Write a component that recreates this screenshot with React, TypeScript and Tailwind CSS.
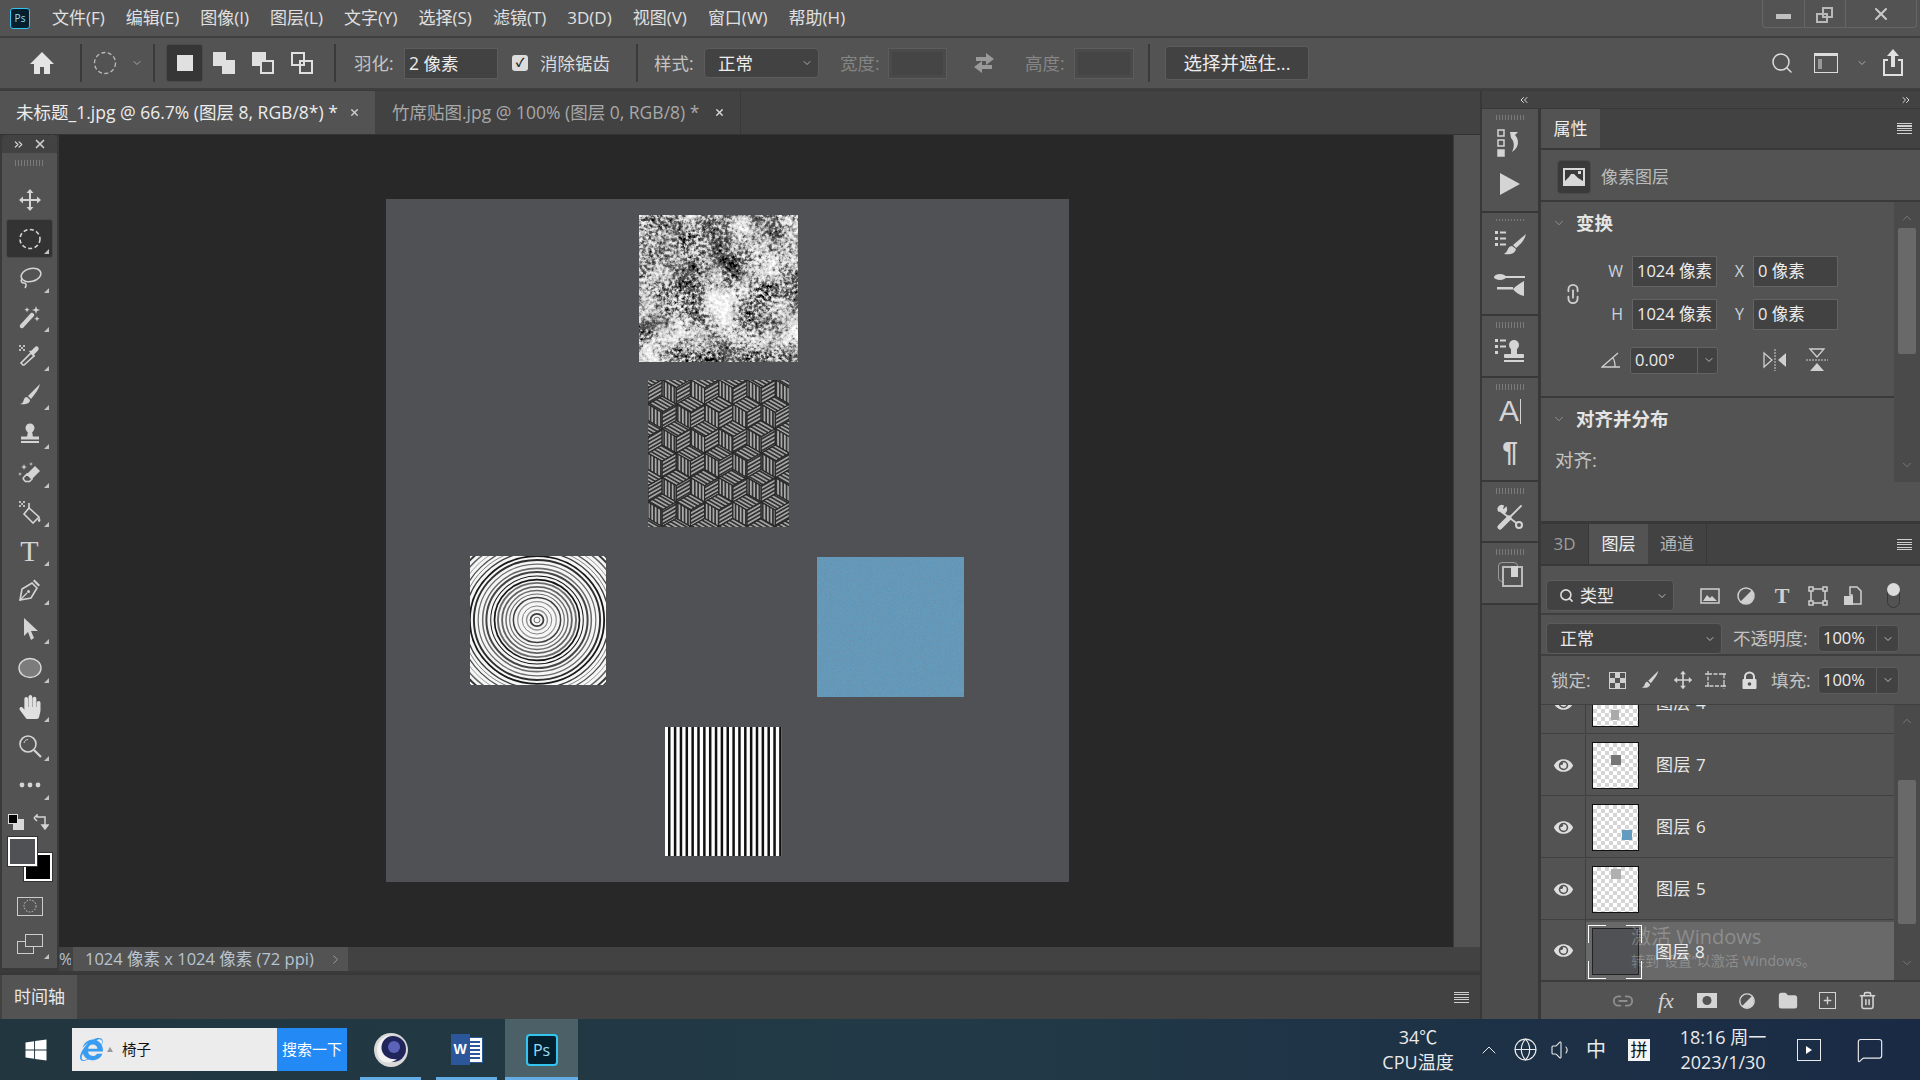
import React from "react";
import { ChevronDown, ChevronUp, ChevronsLeft, ChevronsRight, Globe, Volume1, MessageSquare, Search, X, Link2, Folder, Trash2, Plus, ChevronRight } from "lucide-react";
import { FaHandPaper, FaWindows, FaInternetExplorer, FaEye } from "react-icons/fa";

const menus = ["文件(F)", "编辑(E)", "图像(I)", "图层(L)", "文字(Y)", "选择(S)", "滤镜(T)", "3D(D)", "视图(V)", "窗口(W)", "帮助(H)"];

const Grip = () => (
    <div className="h-[6px] w-[29px] mx-auto bg-[repeating-linear-gradient(90deg,#7a7a7a_0,#7a7a7a_1px,transparent_1px,transparent_3px)]" />
);

const Tri = () => (
    <span className="absolute right-[8px] bottom-[4px] w-0 h-0 border-l-[5px] border-l-transparent border-b-[5px] border-b-[#c4c4c4]" />
);

const Burger = ({ className = "" }: { className?: string }) => (
    <div className={`w-[15px] h-[11px] bg-[repeating-linear-gradient(180deg,#cfcfcf_0,#cfcfcf_1px,transparent_1px,transparent_2.5px)] ${className}`} />
);

const Ico = ({ children, size = 24, className = "" }: { children: React.ReactNode; size?: number; className?: string }) => (
    <svg width={size} height={size} viewBox="0 0 24 24" fill="#d4d4d4" className={className}>
        {children}
    </svg>
);

const line = { fill: "none", stroke: "#d4d4d4", strokeWidth: 1.6 };

const Checker = () => (
    <g fill="#bdbdbd">
        <rect x="1" y="1" width="2" height="2" />
        <rect x="5" y="1" width="2" height="2" />
        <rect x="3" y="3" width="2" height="2" />
        <rect x="1" y="5" width="2" height="2" />
        <rect x="5" y="5" width="2" height="2" />
    </g>
);

const tools: React.ReactNode[] = [
    <Ico><path d="M12 1l3.500 4H13v6h6V8.500l4 3.500-4 3.500V13h-6v6h2.500L12 23l-3.500-4H11v-6H5v2.500L1 12l4-3.500V11h6V5H8.500z" /></Ico>,
    <Ico><ellipse cx="12" cy="12" rx="10" ry="9.500" {...line} strokeDasharray="4 2.500" /></Ico>,
    <Ico><ellipse cx="13" cy="9" rx="10" ry="6.500" transform="rotate(-14 13 9)" {...line} /><path d="M4 13c-2 2 0 4 2 4s3 2 1 5" {...line} /></Ico>,
    <Ico><path d="M2 20l11-12c1-1 4 1 3 3L5 23c-2 1-4-1-3-3z" /><path d="M18 1l1 3 3 1-3 1-1 3-1-3-3-1 3-1zM9 2l.7 2 2 .7-2 .7L9 7.500l-.7-2-2-.7 2-.7zM19 11l.7 2 2 .7-2 .7-.7 2-.7-2-2-.7 2-.7z" /></Ico>,
    <Ico><Checker /><path d="M5 21l-2-2 10-10 3 3-10 9z" {...line} /><path d="M13 7l4-4c2-2 5 1 3 3.500l-4 4 1 1-1 1-5-5 1-1z" /></Ico>,
    <Ico><path d="M22 1L10 13l3 3C17 11 21 6 22 1z" /><path d="M9 14c-3 0-3 3-4 5-.5 1-2 2-3 2 4 1 10 0 10-4z" /></Ico>,
    <Ico><circle cx="12" cy="6" r="4.500" /><path d="M10 9h4l1 6h-6z" /><rect x="3" y="14.500" width="18" height="3" /><rect x="3" y="19" width="18" height="2" /></Ico>,
    <Ico><path d="M9 13l8-8 5 5-8 8z" /><path d="M9 13l-3 3c-1 1-1 2 0 3l1.500 1.500h4L14 18z" {...line} /><path d="M6 3l.8 2.200L9 6l-2.200.8L6 9l-.8-2.200L3 6l2.200-.8zM13 1l.5 1.500L15 3l-1.500.5L13 5l-.5-1.500L11 3l1.500-.5zM2 11l.5 1.500L4 13l-1.500.5L2 15l-.5-1.500L0 13l1.500-.5z" /></Ico>,
    <Ico><Checker /><path d="M11 8l10 9-6 6-9-9z" {...line} /><path d="M11 8V3" {...line} /><path d="M21 17c1 1.500 2 3 1 4.500-1 1-2.500 0-2-1.500z" /></Ico>,
    <span className="font-['Liberation_Serif'] text-[30px] leading-none text-[#d4d4d4]">T</span>,
    <Ico><path d="M2 22l2-11 10-6 5 5-6 10z" {...line} /><path d="M15 3l1.500-1.500 5.500 5.500L20.500 8.500z" /><path d="M2 22l7-7" {...line} strokeWidth="1.200" /><circle cx="10.500" cy="13.500" r="1.500" /></Ico>,
    <Ico><path d="M6 1l14 13h-7l3 7-3 2-3-8-4 4z" /></Ico>,
    <Ico><ellipse cx="12" cy="12" rx="11" ry="9.500" fill="#7c7c7c" stroke="#d8d8d8" strokeWidth="1.400" /></Ico>,
    <FaHandPaper size={24} color="#e0e0e0" />,
    <Ico><circle cx="10" cy="10" r="8" {...line} /><path d="M16 16l7 7" {...line} strokeWidth="2.200" /><path d="M6 9c.5-2 2-3.500 4-3.500" {...line} strokeWidth="1" /></Ico>,
    <Ico><circle cx="4" cy="12" r="2.400" /><circle cx="12" cy="12" r="2.400" /><circle cx="20" cy="12" r="2.400" /></Ico>,
];

const Toolbar = () => (
    <div className="w-[57px] h-[833px] bg-[#535353] border-r-2 border-[#3a3a3a] rounded-t-md ml-[2px] flex flex-col shrink-0">
        <div className="h-[18px] bg-[#424242] flex items-center justify-between px-[10px] rounded-t-md">
            <ChevronsRight size={13} color="#ddd" />
            <X size={14} color="#ccc" strokeWidth={3} />
        </div>
        <div className="h-[27px] pt-[7px]"><Grip /></div>
        {tools.map((t, i) => (
            <div key={i} className="relative h-[39px] flex items-center justify-center">
                {i === 1 && <div className="absolute left-[4px] right-[4px] top-0 bottom-0 bg-[#333333] border border-[#4a4a4a] rounded-[3px]" />}
                <div className="relative flex items-center justify-center">{t}</div>
                {i !== 0 && <Tri />}
            </div>
        ))}
        <div className="flex justify-between items-center h-[20px] mt-[8px] pl-[6px] pr-[8px]">
            <div className="relative w-[16px] h-[16px]">
                <div className="absolute right-0 bottom-0 w-[11px] h-[11px] bg-[#d8d8d8]" />
                <div className="absolute left-0 top-0 w-[10px] h-[10px] bg-black border border-[#ddd]" />
            </div>
            <svg width="16" height="16" viewBox="0 0 16 16" fill="none" stroke="#d4d4d4" strokeWidth="1.500"><path d="M1 4l3-3v2h8v9" /><path d="M9 11l3 4 3-4z" fill="#d4d4d4" /><path d="M1 4l3 3" /></svg>
        </div>
        <div className="relative h-[44px] mt-[6px]">
            <div className="absolute left-[22px] top-[15px] w-[28px] h-[28px] bg-black border-2 border-white outline outline-[#333]" />
            <div className="absolute left-[6px] top-[-1px] w-[29px] h-[29px] bg-[#505155] border-2 border-white outline outline-[#333]" />
        </div>
        <div className="h-[38px] mt-[5px] flex items-center justify-center">
            <div className="w-[26px] h-[19px] border border-[#ccc] flex items-center justify-center">
                <svg width="14" height="14" viewBox="0 0 14 14"><circle cx="7" cy="7" r="6" fill="none" stroke="#ccc" strokeDasharray="1.500 1.500" /></svg>
            </div>
        </div>
        <div className="relative h-[38px] flex items-center justify-center">
            <div className="relative w-[26px] h-[20px]">
                <div className="absolute left-0 bottom-0 w-[17px] h-[13px] border border-[#ccc]" />
                <div className="absolute right-0 top-0 w-[18px] h-[13px] border border-[#ccc] bg-[#535353]" />
            </div>
            <Tri />
        </div>
    </div>
);

const h = 14.15;
const r = 16.3;
const cubes: { x: number; y: number }[] = [];
for (let row = -1; row < 8; row++) {
    for (let col = -1; col < 7; col++) {
        cubes.push({ x: col * h * 2 + (row % 2 === 0 ? 0 : h), y: row * r * 1.5 + 8 });
    }
}

const rings: { rx: number; sw: number; c: string; o: number }[] = [];
let seed = 11;
const rnd = () => {
    seed = (seed * 16807) % 2147483647;
    return seed / 2147483647;
};
for (let a = 3; a < 115; a += 3.4 + rnd() * 1.3) {
    rings.push({ rx: a, sw: 0.8 + rnd() * 1.2, c: rnd() > 0.4 ? "#101010" : "#666666", o: 0.6 + rnd() * 0.4 });
}

const stripes = Array.from({ length: 20 }, (_, i) => i * 5.85 + 3);

const Canvas = () => (
    <div className="flex-1 bg-[#282828] pl-[327px] pt-[64px] overflow-hidden">
        <div className="relative w-[683px] h-[683px] bg-[#505155]">
            <svg width="159" height="147" className="absolute left-[253px] top-[16px]">
                <filter id="grunge" x="0" y="0" width="100%" height="100%">
                    <feTurbulence type="fractalNoise" baseFrequency="0.03" numOctaves="3" seed="21" result="big" />
                    <feTurbulence type="fractalNoise" baseFrequency="0.3" numOctaves="3" seed="5" result="fine" />
                    <feComposite in="big" in2="fine" operator="arithmetic" k1="0" k2="0.7" k3="0.7" k4="-0.1" />
                    <feColorMatrix values="1 0 0 0 0 1 0 0 0 0 1 0 0 0 0 0 0 0 0 1" />
                    <feComponentTransfer>
                        <feFuncR type="table" tableValues="0 0 0.12 0.72 1 1 1" />
                        <feFuncG type="table" tableValues="0 0 0.12 0.72 1 1 1" />
                        <feFuncB type="table" tableValues="0 0 0.12 0.72 1 1 1" />
                    </feComponentTransfer>
                </filter>
                <rect width="159" height="147" filter="url(#grunge)" />
            </svg>
            <svg width="141" height="147" className="absolute left-[262px] top-[181px]">
                <defs>
                    <pattern id="sv" width="3.4" height="3.4" patternUnits="userSpaceOnUse"><rect width="3.4" height="3.4" fill="#333" /><rect width="1.7" height="3.4" fill="#aaa" /></pattern>
                    <pattern id="sa" width="3.4" height="3.4" patternUnits="userSpaceOnUse" patternTransform="rotate(120)"><rect width="3.4" height="3.4" fill="#333" /><rect width="1.7" height="3.4" fill="#a4a4a4" /></pattern>
                    <pattern id="sb" width="3.4" height="3.4" patternUnits="userSpaceOnUse" patternTransform="rotate(60)"><rect width="3.4" height="3.4" fill="#333" /><rect width="1.7" height="3.4" fill="#a4a4a4" /></pattern>
                </defs>
                {cubes.map((c, i) => (
                    <g key={i} stroke="#2a2a2a" strokeWidth="1.200">
                        <polygon fill="url(#sa)" points={`${c.x},${c.y} ${c.x + h},${c.y - r / 2} ${c.x},${c.y - r} ${c.x - h},${c.y - r / 2}`} />
                        <polygon fill="url(#sv)" points={`${c.x},${c.y} ${c.x - h},${c.y - r / 2} ${c.x - h},${c.y + r / 2} ${c.x},${c.y + r}`} />
                        <polygon fill="url(#sb)" points={`${c.x},${c.y} ${c.x + h},${c.y - r / 2} ${c.x + h},${c.y + r / 2} ${c.x},${c.y + r}`} />
                    </g>
                ))}
            </svg>
            <svg width="136" height="129" className="absolute left-[84px] top-[357px]">
                <rect width="136" height="129" fill="#f6f6f6" />
                {rings.map((e, i) => (
                    <ellipse key={i} cx="67" cy="64" rx={e.rx} ry={e.rx * 0.95} fill="none" stroke={e.c} strokeOpacity={e.o} strokeWidth={e.sw} />
                ))}
            </svg>
            <svg width="147" height="140" className="absolute left-[431px] top-[358px]">
                <filter id="grain" x="0" y="0" width="100%" height="100%">
                    <feTurbulence type="fractalNoise" baseFrequency="1.1" numOctaves="2" seed="4" />
                    <feColorMatrix values="0 0 0 0 0.15 0 0 0 0 0.25 0 0 0 0 0.35 1.4 0 0 0 -0.5" />
                </filter>
                <rect width="147" height="140" fill="#639cbe" />
                <rect width="147" height="140" filter="url(#grain)" />
            </svg>
            <svg width="117" height="129" className="absolute left-[279px] top-[528px]">
                <rect width="117" height="129" fill="#fdfdfd" />
                {stripes.map((x, i) => (
                    <rect key={i} x={x} width="2.500" height="129" fill="#111" />
                ))}
            </svg>
        </div>
    </div>
);

const DockGroup = ({ className, children }: { className: string; children: React.ReactNode }) => (
    <div className={`bg-[#535353] pt-[6px] flex flex-col items-center shrink-0 ${className}`}>
        <Grip />
        {children}
    </div>
);

const IconDock = () => (
    <div className="w-[56px] ml-[2px] flex flex-col gap-[2px] shrink-0 h-full">
        <DockGroup className="h-[102px]">
            <div className="h-[37px] flex items-end shrink-0">
                <svg width="26" height="28" viewBox="0 0 26 28" fill="none" stroke="#d4d4d4" strokeWidth="1.500">
                    <rect x="1" y="1" width="6" height="6" /><rect x="1" y="11" width="6" height="6" /><rect x="1" y="21" width="6" height="6" fill="#d4d4d4" />
                    <path d="M13 3h8l-3 3c4 4 5 12-3 17 3-6 2-11-1-14z" fill="#d4d4d4" stroke="none" />
                </svg>
            </div>
            <div className="h-[54px] flex items-center shrink-0"><svg width="22" height="22" viewBox="0 0 22 22"><path d="M1 0l20 11L1 22z" fill="#d4d4d4" /></svg></div>
        </DockGroup>
        <DockGroup className="h-[101px]">
            <div className="h-[35px] flex items-end shrink-0">
                <svg width="31" height="26" viewBox="0 0 31 26" fill="#d4d4d4"><rect x="0" y="1" width="3" height="3" /><rect x="0" y="7" width="3" height="3" /><rect x="0" y="13" width="3" height="3" /><rect x="5" y="1.500" width="6" height="2" /><rect x="5" y="7.500" width="6" height="2" /><rect x="5" y="13.500" width="6" height="2" /><path d="M31 4L18 15l3 3C26 14 30 9 31 4z" /><path d="M17 16c-3 0-4 3-5 5-.5 1-1.500 2-3 3 5 1 11 0 12-5z" /></svg>
            </div>
            <div className="h-[58px] flex items-center shrink-0">
                <svg width="32" height="24" viewBox="0 0 32 24" fill="#d4d4d4"><ellipse cx="6" cy="4" rx="6" ry="3" /><rect x="11" y="3" width="20" height="2" /><rect x="3" y="14" width="16" height="2.500" /><path d="M30 8v15c-5-1-9-4-11-7 3-3 7-6 11-8z" /></svg>
            </div>
        </DockGroup>
        <DockGroup className="h-[60px]">
            <div className="h-[36px] flex items-end shrink-0">
                <svg width="30" height="26" viewBox="0 0 30 26" fill="#d4d4d4"><rect x="0" y="1" width="3" height="3" /><rect x="0" y="7" width="3" height="3" /><rect x="0" y="13" width="3" height="3" /><rect x="5" y="1.500" width="6" height="2" /><rect x="5" y="7.500" width="6" height="2" /><circle cx="19" cy="7" r="5" /><rect x="16" y="10" width="6" height="6" /><rect x="9" y="16" width="20" height="4" rx="1" /><rect x="9" y="22" width="20" height="2" /></svg>
            </div>
        </DockGroup>
        <DockGroup className="h-[102px]">
            <div className="h-[38px] flex items-end font-['Liberation_Sans'] text-[#d4d4d4] text-[30px] leading-[34px] shrink-0">A<span className="w-px h-[25px] bg-[#d4d4d4] mb-[4px] ml-[1px]" /></div>
            <div className="h-[48px] flex items-center text-[#d4d4d4] text-[28px] font-bold font-['Liberation_Sans'] shrink-0">¶</div>
        </DockGroup>
        <DockGroup className="h-[59px]">
            <div className="h-[36px] flex items-end shrink-0">
                <svg width="28" height="26" viewBox="0 0 28 26" fill="none" stroke="#d4d4d4" strokeLinecap="round">
                    <path d="M4 23l9-9" strokeWidth="5" />
                    <path d="M13 14L25 2" strokeWidth="1.800" />
                    <path d="M3 7c-2-3 1-6 4-5l-1 3 2 1 2-2c1 3-1 5-3 5l16 12" strokeWidth="1.800" fill="#d4d4d4" />
                    <circle cx="23" cy="21" r="3" strokeWidth="2" fill="#535353" />
                </svg>
            </div>
        </DockGroup>
        <DockGroup className="h-[60px]">
            <div className="h-[32px] flex items-end shrink-0">
                <div className="relative w-[25px] h-[25px]">
                    <div className="absolute left-0 top-0 w-[20px] h-[20px] border border-[#999] rounded-sm" />
                    <div className="absolute right-0 bottom-0 w-[21px] h-[21px] border-2 border-[#bbb] bg-[#535353]" />
                    <div className="absolute right-[5px] top-[4px] w-[7px] h-[11px] bg-[#d4d4d4]" />
                </div>
            </div>
        </DockGroup>
        <div className="flex-1 bg-[#4c4c4c]" />
    </div>
);

const Field = ({ v }: { v: string }) => (
    <div className="w-[85px] h-[31px] bg-[#424242] border border-[#636363] flex items-center pl-[4px] text-[16.500px] text-[#ececec] whitespace-nowrap">{v}</div>
);

const Sect = ({ t }: { t: string }) => (
    <div className="flex items-center pl-[11px] text-[18.500px] font-bold text-[#e4e4e4]">
        <ChevronDown size={14} color="#aaa" strokeWidth={1.2} />
        <span className="ml-[10px]">{t}</span>
    </div>
);

const PropsPanel = () => (
    <div className="h-[412px] bg-[#535353] flex flex-col shrink-0">
        <div className="h-[41px] bg-[#424242] flex items-center border-b-2 border-[#383838] shrink-0">
            <div className="w-[59px] h-full bg-[#535353] flex items-center justify-center text-[17px] text-[#eee]">属性</div>
            <Burger className="ml-auto mr-[8px]" />
        </div>
        <div className="h-[52px] flex items-center pl-[16px] pt-[3px] border-b-2 border-[#3a3a3a] shrink-0">
            <div className="w-[34px] h-[34px] bg-[#3a3a3a] border border-[#4a4a4a] rounded-[4px] flex items-center justify-center">
                <svg width="22" height="18" viewBox="0 0 22 18"><rect width="22" height="18" fill="#d8d8d8" /><rect x="2" y="2" width="18" height="11" fill="#3a3a3a" /><path d="M2 13l4-4 2-3 3 0 2 2 2 2 5 3z" fill="#d8d8d8" /><rect x="15" y="3" width="3" height="3" fill="#d8d8d8" /></svg>
            </div>
            <span className="ml-[10px] text-[17px] text-[#bcbcbc]">像素图层</span>
        </div>
        <div className="h-[280px] flex shrink-0">
            <div className="w-[353px]">
                <div className="h-[196px] border-b-2 border-[#3a3a3a] pt-[7px]">
                    <Sect t="变换" />
                    <div className="relative flex flex-col gap-[12px] pt-[19px] pl-[58px]">
                        <Link2 size={22} color="#cfcfcf" className="absolute left-[21px] top-[46px] rotate-90" />
                        {[["W", "1024 像素", "X", "0 像素"], ["H", "1024 像素", "Y", "0 像素"]].map((row) => (
                            <div key={row[0]} className="flex items-center text-[16px] text-[#c8d4de]">
                                <span className="w-[33px] text-right pr-[9px]">{row[0]}</span>
                                <Field v={row[1]} />
                                <span className="w-[36px] text-right pr-[9px]">{row[2]}</span>
                                <Field v={row[3]} />
                            </div>
                        ))}
                    </div>
                    <div className="flex items-center mt-[17px] pl-[60px]">
                        <svg width="20" height="16" viewBox="0 0 20 16" fill="none" stroke="#cfcfcf" strokeWidth="1.300"><path d="M19 15H1L17 1M12 6c2 3 2 6 2 9" /></svg>
                        <div className="ml-[9px] w-[88px] h-[27px] bg-[#424242] border border-[#636363] rounded-[3px] flex items-center text-[16.500px] text-[#ececec] pl-[4px]">
                            <span className="w-[62px]">0.00°</span>
                            <div className="h-full w-px bg-[#636363]" />
                            <ChevronDown size={12} color="#bbb" className="ml-[5px]" />
                        </div>
                        <svg width="24" height="24" viewBox="0 0 24 24" className="ml-[45px]"><path d="M1 5l8 7-8 7z" fill="none" stroke="#cfcfcf" strokeWidth="1.300" /><path d="M23 5l-8 7 8 7z" fill="#cfcfcf" /><path d="M12 1v22" stroke="#cfcfcf" strokeDasharray="2 1" /></svg>
                        <svg width="24" height="24" viewBox="0 0 24 24" className="ml-[18px]"><path d="M5 1l7 8 7-8z" fill="none" stroke="#cfcfcf" strokeWidth="1.300" /><path d="M5 23l7-8 7 8z" fill="#cfcfcf" /><path d="M1 12h22" stroke="#cfcfcf" strokeDasharray="2 1" /></svg>
                    </div>
                </div>
                <div className="pt-[7px]">
                    <Sect t="对齐并分布" />
                    <div className="mt-[13px] pl-[14px] text-[18.500px] text-[#c4c4c4]">对齐:</div>
                </div>
            </div>
            <div className="w-[26px] ml-auto bg-[#4a4a4a] flex flex-col items-center pt-[9px]">
                <ChevronUp size={14} color="#8c8c8c" strokeWidth={1.2} />
                <div className="w-[18px] h-[126px] bg-[#696969] rounded-[2px] mt-[3px]" />
                <ChevronDown size={14} color="#8c8c8c" strokeWidth={1.2} className="mt-auto mb-[10px]" />
            </div>
        </div>
    </div>
);

const DropBox = ({ w, label, icon }: { w: string; label: string; icon?: boolean }) => (
    <div className={`${w} h-[31px] bg-[#424242] border border-[#5c5c5c] rounded-[4px] flex items-center text-[17px] text-[#e8e8e8]`}>
        {icon ? <Search size={15} color="#ddd" strokeWidth={2.500} className="ml-[12px] mr-[6px]" /> : <span className="w-[13px]" />}
        <span>{label}</span>
        <ChevronDown size={12} color="#bbb" className="ml-auto mr-[5px]" />
    </div>
);

const PctBox = ({ v }: { v: string }) => (
    <div className="w-[81px] h-[27px] bg-[#424242] border border-[#5c5c5c] rounded-[4px] flex items-center text-[16.500px] text-[#ececec] pl-[4px]">
        <span className="w-[53px]">{v}</span>
        <div className="h-full w-px bg-[#5c5c5c]" />
        <ChevronDown size={12} color="#bbb" className="ml-[5px]" />
    </div>
);

const rowsData = [
    { name: "图层 4", mark: "bg-[#aaaaaa] left-[18px] top-[29px] w-[8px] h-[10px]" },
    { name: "图层 7", mark: "bg-[#757575] left-[18px] top-[12px] w-[10px] h-[10px]" },
    { name: "图层 6", mark: "bg-[#639cbe] left-[29px] top-[25px] w-[10px] h-[10px]" },
    { name: "图层 5", mark: "bg-[#b0b0b0] left-[18px] top-[2px] w-[10px] h-[10px]" },
];

const LayerRow = ({ name, mark, first }: { name: string; mark: string; first?: boolean }) => (
    <div className={`h-[61px] flex border-b border-[#404040] shrink-0 ${first ? "mt-[-32px]" : "mt-px"}`}>
        <div className="w-[45px] flex items-center justify-center border-r border-[#404040]">
            <FaEye size={19} color="#dedede" />
        </div>
        <div className="flex items-center pl-[6px]">
            <div className="relative w-[47px] h-[47px] border-[1.500px] border-[#111] bg-[repeating-conic-gradient(#d6d6d6_0_25%,#fff_0_50%)] bg-size-[8px_8px]">
                <div className={`absolute ${mark}`} />
            </div>
        </div>
        <span className="ml-[17px] self-center text-[17px] tracking-[0.5px] text-[#e8e8e8]">{name}</span>
    </div>
);

const LayersPanel = () => (
    <div className="flex-1 mt-[3px] flex flex-col bg-[#535353] min-h-0">
        <div className="h-[42px] bg-[#424242] flex items-stretch border-b-2 border-[#383838] text-[17px] shrink-0">
            <div className="w-[48px] flex items-center justify-center text-[#9e9e9e] border-r border-[#383838]">3D</div>
            <div className="w-[59px] bg-[#535353] flex items-center justify-center text-[#eee]">图层</div>
            <div className="w-[59px] flex items-center justify-center text-[#b4b4b4] border-r border-[#383838]">通道</div>
            <Burger className="ml-auto mr-[8px] self-center" />
        </div>
        <div className="h-[49px] flex items-center pl-[5px] pt-[12px] border-b-2 border-[#3f3f3f] shrink-0">
            <DropBox w="w-[128px]" label="类型" icon />
            <div className="flex items-center gap-[16px] ml-[26px]">
                <svg width="20" height="16" viewBox="0 0 20 16"><rect x="1" y="1" width="18" height="14" fill="none" stroke="#cfcfcf" strokeWidth="1.500" /><path d="M3 13l4-6 3 3 2-2 5 5z" fill="#cfcfcf" /></svg>
                <svg width="20" height="20" viewBox="0 0 20 20"><circle cx="10" cy="10" r="8" fill="none" stroke="#cfcfcf" strokeWidth="1.500" /><path d="M15.600 4.400a8 8 0 0 1-11.300 11.300z" fill="#cfcfcf" /></svg>
                <span className="font-['Liberation_Serif'] font-bold text-[22px] leading-none text-[#cfcfcf] w-[20px] text-center">T</span>
                <svg width="20" height="20" viewBox="0 0 20 20" fill="none" stroke="#cfcfcf" strokeWidth="1.500"><rect x="3" y="3" width="14" height="14" /><rect x="1" y="1" width="4" height="4" fill="#535353" /><rect x="15" y="1" width="4" height="4" fill="#535353" /><rect x="1" y="15" width="4" height="4" fill="#535353" /><rect x="15" y="15" width="4" height="4" fill="#535353" /></svg>
                <svg width="18" height="20" viewBox="0 0 18 20"><path d="M6 1h7l4 4v13H8V9H6z" fill="none" stroke="#cfcfcf" strokeWidth="1.500" /><rect x="0" y="10" width="9" height="9" fill="#cfcfcf" /></svg>
            </div>
            <div className="relative ml-[25px] w-[13px] h-[25px] border border-[#383838] rounded-full">
                <div className="absolute top-[-1px] left-[-1px] w-[13px] h-[13px] rounded-full bg-[#dcdcdc]" />
            </div>
        </div>
        <div className="h-[41px] flex items-center pl-[5px] pt-[8px] border-b-2 border-[#3f3f3f] shrink-0">
            <DropBox w="w-[176px]" label="正常" />
            <span className="ml-[11px] w-[85px] text-[17.500px] text-[#c4c4c4] whitespace-nowrap">不透明度:</span>
            <PctBox v="100%" />
        </div>
        <div className="h-[48px] flex items-center pl-[10px] shrink-0">
            <span className="w-[50px] text-[17.500px] text-[#c4c4c4] whitespace-nowrap">锁定:</span>
            <div className="w-[17px] h-[17px] ml-[8px] border border-[#cfcfcf] bg-[repeating-conic-gradient(#cfcfcf_0_25%,#535353_0_50%)] bg-size-[10px_10px]" />
            <Ico size={20} className="ml-[14px]"><path d="M22 1L10 13l3 3C17 11 21 6 22 1z" /><path d="M9 14c-3 0-3 3-4 5-.5 1-2 2-3 2 4 1 10 0 10-4z" /></Ico>
            <Ico size={20} className="ml-[13px]"><path d="M12 1l3.500 4H13v6h6V8.500l4 3.500-4 3.500V13h-6v6h2.500L12 23l-3.500-4H11v-6H5v2.500L1 12l4-3.500V11h6V5H8.500z" /></Ico>
            <svg width="22" height="20" viewBox="0 0 22 20" fill="none" stroke="#cfcfcf" strokeWidth="1.300" className="ml-[12px]"><path d="M3 4h16v12H3zM0 4h5M3 1v5M17 16h5M19 13v6M0 16h5M17 4h5" strokeDasharray="4 1.500" /></svg>
            <svg width="19" height="19" viewBox="0 0 19 19" className="ml-[13px]"><path d="M5 9V6a4.500 4.500 0 0 1 9 0v3" fill="none" stroke="#dcdcdc" strokeWidth="2" /><rect x="2.500" y="8" width="14" height="10" rx="1" fill="#dcdcdc" /><circle cx="9.500" cy="13" r="1.800" fill="#535353" /></svg>
            <span className="ml-[12px] w-[47px] text-[17.500px] text-[#c4c4c4] whitespace-nowrap">填充:</span>
            <PctBox v="100%" />
        </div>
        <div className="h-[276px] flex overflow-hidden border-t border-[#404040] shrink-0">
            <div className="w-[353px] flex flex-col">
                <LayerRow name="图层 4" mark={rowsData[0].mark} first />
                <LayerRow name="图层 7" mark={rowsData[1].mark} />
                <LayerRow name="图层 6" mark={rowsData[2].mark} />
                <LayerRow name="图层 5" mark={rowsData[3].mark} />
                <div className="h-[61px] flex shrink-0">
                    <div className="w-[45px] flex items-center justify-center border-r border-[#404040]">
                        <FaEye size={19} color="#dedede" />
                    </div>
                    <div className="flex-1 bg-[#696969] flex items-center pl-[2px] mt-[2px]">
                        <div className="relative w-[54px] h-[54px] flex items-center justify-center">
                            <div className="w-[47px] h-[47px] bg-[#505155] border-[1.500px] border-[#222]" />
                            <div className="absolute left-0 top-0 w-[18px] h-[18px] border-l-[1.500px] border-t-[1.500px] border-white" />
                            <div className="absolute right-0 top-0 w-[16px] h-[18px] border-r-[1.500px] border-t-[1.500px] border-white" />
                            <div className="absolute left-0 bottom-0 w-[18px] h-[18px] border-l-[1.500px] border-b-[1.500px] border-white" />
                            <div className="absolute right-0 bottom-0 w-[16px] h-[18px] border-r-[1.500px] border-b-[1.500px] border-white" />
                        </div>
                        <span className="ml-[13px] text-[17px] tracking-[0.5px] text-[#ececec]">图层 8</span>
                    </div>
                </div>
            </div>
            <div className="w-[26px] ml-auto bg-[#4a4a4a] flex flex-col items-center pt-[9px]">
                <ChevronUp size={14} color="#8c8c8c" strokeWidth={1.2} />
                <div className="w-[18px] h-[144px] bg-[#696969] rounded-[2px] mt-[52px]" />
                <ChevronDown size={14} color="#8c8c8c" strokeWidth={1.2} className="mt-auto mb-[10px]" />
            </div>
        </div>
        <div className="flex-1 border-t-2 border-[#3c3c3c] flex items-center pl-[71px] gap-[19px] text-[#d4d4d4]">
            <Link2 size={22} color="#8f8f8f" />
            <span className="italic font-['Liberation_Serif'] text-[22px] leading-none w-[20px] ml-[5px]">fx</span>
            <svg width="20" height="15" viewBox="0 0 20 15"><rect width="20" height="15" fill="#d4d4d4" /><circle cx="10" cy="7.500" r="4.500" fill="#535353" /></svg>
            <svg width="18" height="18" viewBox="0 0 20 20" className="ml-[2px]"><circle cx="10" cy="10" r="8" fill="none" stroke="#d4d4d4" strokeWidth="1.500" /><path d="M15.600 4.400a8 8 0 0 1-11.300 11.300z" fill="#d4d4d4" /></svg>
            <Folder size={20} color="#d4d4d4" fill="#d4d4d4" className="ml-[3px]" />
            <div className="w-[17px] h-[17px] border-[1.500px] border-[#d4d4d4] flex items-center justify-center ml-[2px]"><Plus size={11} strokeWidth={3} /></div>
            <Trash2 size={19} color="#d4d4d4" className="ml-[3px]" />
        </div>
    </div>
);

const Taskbar = () => (
    <div className="relative h-[61px] bg-linear-to-r from-[#21363f] via-[#223a47] to-[#1a2a45] flex items-center text-white shrink-0">
        <div className="w-[72px] flex justify-center pr-[1px]"><FaWindows size={24} /></div>
        <div className="w-[205px] h-[43px] bg-[#ececec] flex items-center text-[#111] text-[14.500px]">
            <FaInternetExplorer size={23} color="#3a9cf0" className="ml-[8px]" />
            <span className="ml-[4px] w-0 h-0 border-x-[3px] border-x-transparent border-b-[5px] border-b-[#999]" />
            <span className="ml-[9px]">椅子</span>
        </div>
        <div className="w-[70px] h-[43px] bg-[#2289f5] flex items-center justify-center text-[15px] whitespace-nowrap">搜索一下</div>
        <div className="w-[61px] ml-[13px] h-full relative flex items-center justify-center">
            <svg width="36" height="36" viewBox="0 0 36 36"><circle cx="18" cy="18" r="17" fill="#d8d8d8" /><circle cx="20" cy="17" r="13" fill="#20255c" /><circle cx="21" cy="15" r="6" fill="#5a63b8" /><path d="M4 18c0-9 7-14 14-15-7 3-11 9-9 16 2 6 9 9 15 8-3 3-8 4-12 3C7 29 4 24 4 18z" fill="#f2f2f2" /></svg>
            <div className="absolute bottom-0 left-0 right-0 h-[3px] bg-[#63ace5]" />
        </div>
        <div className="w-[61px] ml-[15px] h-full relative flex items-center justify-center">
            <div className="relative w-[32px] h-[31px] flex justify-end items-center">
                <div className="w-[24px] h-[26px] bg-white border border-[#2b579a] flex flex-col justify-center gap-[2px] pl-[10px]">
                    {[0, 1, 2, 3, 4].map((i) => <div key={i} className="w-[10px] h-[2px] bg-[#2b579a]" />)}
                </div>
                <div className="absolute left-0 top-0 w-[19px] h-[31px] bg-[#2b579a] flex items-center justify-center font-['Liberation_Sans'] font-bold text-[14px]">W</div>
            </div>
            <div className="absolute bottom-0 left-0 right-0 h-[3px] bg-[#63ace5]" />
        </div>
        <div className="w-[73px] ml-[8px] h-full relative flex items-center justify-center bg-[#4c6068]">
            <div className="w-[32px] h-[32px] bg-[#04202e] border-2 border-[#31c5f0] rounded-[4px] flex items-center justify-center text-[#9ddcf5] text-[16px] font-['Open_Sans']">Ps</div>
            <div className="absolute bottom-0 left-0 right-0 h-[3px] bg-[#63ace5]" />
        </div>
        <div className="ml-auto flex items-center h-full text-[#eaeaea]">
            <div className="w-[90px] text-center text-[18px] leading-[25px] whitespace-nowrap"><div>34℃</div><div>CPU温度</div></div>
            <ChevronUp size={24} strokeWidth={1} className="ml-[14px]" />
            <Globe size={25} strokeWidth={1.1} className="ml-[12px]" />
            <Volume1 size={24} strokeWidth={1.1} className="ml-[12px]" />
            <span className="ml-[12px] text-[20px]">中</span>
            <div className="ml-[22px] w-[22px] h-[22px] bg-[#f4f4f4] text-[#111] text-[17px] leading-[22px] text-center">拼</div>
            <div className="ml-[21px] w-[104px] text-center text-[18px] leading-[25px] whitespace-nowrap"><div>18:16 周一</div><div>2023/1/30</div></div>
            <div className="ml-[22px] w-[24px] h-[22px] border-[1.500px] border-[#eaeaea] flex items-center justify-center">
                <span className="w-0 h-0 border-y-[4px] border-y-transparent border-l-[6px] border-l-white" />
            </div>
            <MessageSquare size={28} strokeWidth={1} className="ml-[35px] mr-[36px]" />
        </div>
    </div>
);

const Sep = ({ ml }: { ml: string }) => <div className={`w-[2px] h-[38px] bg-[#3a3a3a] shrink-0 ${ml}`} />;

const OptionsBar = () => (
    <div className="h-[54px] bg-[#535353] border-y-2 border-[#3f3f3f] flex items-center shrink-0 text-[17.500px]">
        <svg width="26" height="24" viewBox="0 0 26 24" className="ml-[29px]"><path d="M13 1L1 13h4v10h6v-7h4v7h6V13h4z" fill="#e4e4e4" /></svg>
        <Sep ml="ml-[25px]" />
        <svg width="24" height="24" viewBox="0 0 24 24" className="ml-[11px]"><ellipse cx="12" cy="12" rx="10.500" ry="10.500" fill="none" stroke="#bbb" strokeWidth="1.300" strokeDasharray="4 2.500" /></svg>
        <ChevronDown size={12} color="#aaa" className="ml-[14px]" />
        <Sep ml="ml-[10px]" />
        <div className="ml-[11px] w-[37px] h-[38px] bg-[#363636] border border-[#4a4a4a] rounded-[3px] flex items-center justify-center">
            <div className="w-[16px] h-[16px] bg-[#e0e0e0]" />
        </div>
        <div className="relative ml-[10px] w-[22px] h-[22px]"><div className="absolute left-0 top-0 w-[13px] h-[14px] bg-[#e0e0e0]" /><div className="absolute right-0 bottom-0 w-[13px] h-[14px] bg-[#e0e0e0]" /></div>
        <div className="relative ml-[17px] w-[22px] h-[22px]"><div className="absolute left-0 top-0 w-[14px] h-[14px] bg-[#e0e0e0]" /><div className="absolute right-0 bottom-0 w-[14px] h-[14px] bg-[#535353] border-2 border-[#e0e0e0]" /></div>
        <div className="relative ml-[17px] w-[22px] h-[22px]"><div className="absolute left-0 top-0 w-[14px] h-[14px] border-2 border-[#e0e0e0]" /><div className="absolute right-0 bottom-0 w-[14px] h-[14px] border-2 border-[#e0e0e0]" /></div>
        <Sep ml="ml-[21px]" />
        <span className="ml-[18px] w-[50px] text-[#c4c4c4] whitespace-nowrap">羽化:</span>
        <div className="w-[94px] h-[31px] bg-[#424242] border border-[#5c5c5c] flex items-center pl-[4px] text-[#ececec] whitespace-nowrap">2 像素</div>
        <div className="ml-[14px] w-[16px] h-[16px] bg-[#dcdcdc] rounded-[3px] flex items-center justify-center text-[#222] text-[12px] font-bold leading-none">✓</div>
        <span className="ml-[12px] w-[70px] text-[#dcdcdc] whitespace-nowrap">消除锯齿</span>
        <Sep ml="ml-[26px]" />
        <span className="ml-[16px] w-[50px] text-[#c4c4c4] whitespace-nowrap">样式:</span>
        <div className="w-[115px] h-[30px] bg-[#424242] border border-[#5c5c5c] rounded-[4px] flex items-center pl-[13px] text-[#ececec]">
            正常<ChevronDown size={12} color="#aaa" className="ml-auto mr-[5px]" />
        </div>
        <span className="ml-[21px] w-[48px] text-[#858585] whitespace-nowrap">宽度:</span>
        <div className="w-[59px] h-[31px] bg-[#4a4a4a] border border-[#5c5c5c] p-[3px]"><div className="h-full bg-[#454545]" /></div>
        <svg width="22" height="22" viewBox="0 0 22 22" className="ml-[26px]" fill="#9a9a9a"><path d="M13 1l8 6-8 6V9H3V5h10zM9 9v4h10v4H9v4l-8-6z" /></svg>
        <span className="ml-[30px] w-[49px] text-[#858585] whitespace-nowrap">高度:</span>
        <div className="w-[60px] h-[31px] bg-[#4a4a4a] border border-[#5c5c5c] p-[3px]"><div className="h-full bg-[#454545]" /></div>
        <Sep ml="ml-[14px]" />
        <div className="ml-[15px] w-[144px] h-[34px] bg-[#424242] border border-[#5c5c5c] rounded-[3px] flex items-center justify-center text-[18.500px] text-[#ececec] whitespace-nowrap">选择并遮住...</div>
        <div className="ml-auto flex items-center pr-[15px]">
            <Search size={24} color="#dcdcdc" strokeWidth={1.500} />
            <div className="ml-[20px] w-[24px] h-[20px] border-[1.500px] border-[#dcdcdc] border-t-[3px] pl-[3px] pt-[3px]"><div className="w-[4px] h-[10px] bg-[#999]" /></div>
            <ChevronDown size={12} color="#aaa" className="ml-[18px]" />
            <svg width="24" height="28" viewBox="0 0 24 28" fill="#e0e0e0" className="ml-[13px]"><path d="M12 0l6 7h-4v11h-4V7H6z" /><path d="M2 10h5v2H4v13h16V12h-3v-2h5v17H2z" /></svg>
        </div>
    </div>
);

export default function App() {
    return (
        <div className="relative w-[1920px] h-[1080px] overflow-hidden bg-[#3a3a3a] flex flex-col font-['Open_Sans','Noto_Sans_CJK_SC',sans-serif]">
            <div className="h-[36px] bg-[#535353] flex items-center shrink-0 relative">
                <div className="ml-[10px] w-[20px] h-[21px] bg-[#04202e] border-[1.500px] border-[#31c5f0] rounded-[3px] flex items-center justify-center text-[10px] text-[#9ddcf5]">Ps</div>
                <div className="flex ml-[22px] gap-[21px] text-[17px] text-[#e0e0e0]">
                    {menus.map((m) => <span key={m} className="whitespace-nowrap">{m}</span>)}
                </div>
                <div className="ml-auto mr-[3px] w-[155px] h-[28px] self-start border border-t-0 border-[#666] rounded-b-[4px] flex items-center text-[#c8c8c8]">
                    <div className="w-[42px] h-full border-r border-[#666] flex items-end justify-center pb-[8px]"><div className="w-[15px] h-[5px] bg-[#c0c0c0]" /></div>
                    <div className="w-[41px] h-full border-r border-[#666] relative">
                        <div className="absolute left-[11px] top-[13px] w-[12px] h-[10px] border-2 border-[#b8b8b8]" />
                        <div className="absolute left-[17px] top-[7px] w-[11px] h-[11px] border-2 border-[#b8b8b8]" />
                    </div>
                    <div className="flex-1 flex justify-center"><X size={20} strokeWidth={2.500} color="#c8c8c8" /></div>
                </div>
            </div>
            <OptionsBar />
            <div className="flex flex-1 min-h-0 mt-px">
                <div className="w-[1480px] flex flex-col shrink-0">
                    <div className="h-[44px] bg-[#424242] flex text-[17.500px] shrink-0 border-b border-[#333]">
                        <div className="w-[375px] bg-[#535353] flex items-center pl-[16px] text-[#ececec] whitespace-nowrap">
                            未标题_1.jpg @ 66.7% (图层 8, RGB/8*) *
                            <X size={11} strokeWidth={3} color="#ccc" className="ml-auto mr-[15px]" />
                        </div>
                        <div className="w-[366px] flex items-center pl-[17px] text-[#a8a8a8] whitespace-nowrap border-r border-[#383838]">
                            竹席贴图.jpg @ 100% (图层 0, RGB/8) *
                            <X size={11} strokeWidth={3} color="#ddd" className="ml-auto mr-[15px]" />
                        </div>
                    </div>
                    <div className="h-[838px] flex shrink-0">
                        <Toolbar />
                        <div className="flex-1 flex flex-col min-w-0">
                            <div className="h-[812px] flex">
                                <Canvas />
                                <div className="w-[27px] bg-[#535353] border-l border-[#3a3a3a] shrink-0" />
                            </div>
                            <div className="h-[24px] bg-[#424242] flex items-center text-[#b8c4cf] text-[16.500px]">
                                <span className="w-[12px] overflow-hidden text-right">%</span>
                                <div className="ml-[2px] h-full w-[275px] bg-[#535353] flex items-center pl-[12px] whitespace-nowrap">
                                    1024 像素 x 1024 像素 (72 ppi)
                                    <ChevronRight size={15} strokeWidth={1} className="ml-auto mr-[5px]" />
                                </div>
                            </div>
                        </div>
                    </div>
                    <div className="flex-1 bg-[#424242] border-t-2 border-[#383838] flex items-stretch">
                        <div className="ml-[2px] w-[75px] bg-[#535353] flex items-center justify-center text-[17px] text-[#e8e8e8]">时间轴</div>
                        <Burger className="ml-auto mr-[11px] self-center" />
                    </div>
                </div>
                <div className="flex-1 flex flex-col min-w-0 bg-[#383838]">
                    <div className="h-[17px] bg-[#424242] ml-[2px] flex items-center justify-between pl-[36px] pr-[8px] shrink-0">
                        <ChevronsLeft size={12} color="#ddd" />
                        <ChevronsRight size={12} color="#ddd" />
                    </div>
                    <div className="flex-1 flex gap-[3px] min-h-0 mt-px">
                        <IconDock />
                        <div className="flex-1 flex flex-col min-w-0">
                            <PropsPanel />
                            <LayersPanel />
                        </div>
                    </div>
                </div>
            </div>
            <Taskbar />
            <div className="absolute left-[1631px] top-[922px] text-white/25 pointer-events-none whitespace-nowrap">
                <div className="text-[20px] leading-[30px]">激活 Windows</div>
                <div className="text-[14px] leading-[18px]">转到“设置”以激活 Windows。</div>
            </div>
        </div>
    );
}
